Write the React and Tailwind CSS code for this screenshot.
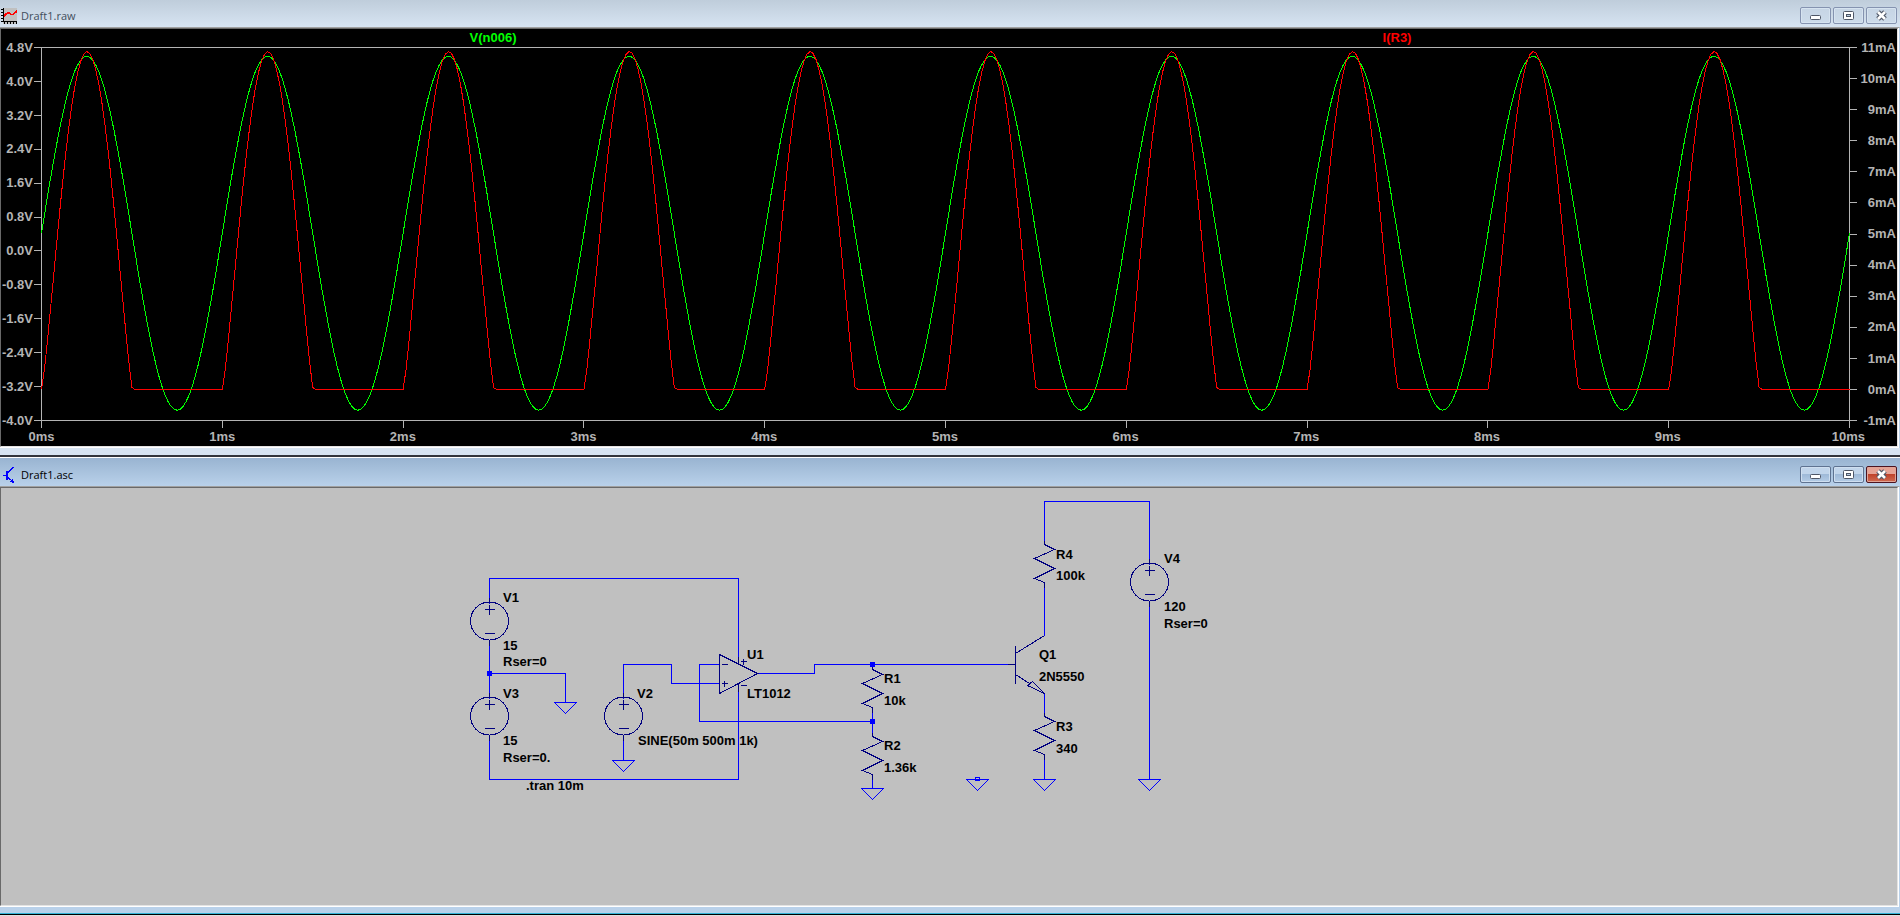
import React from 'react';
import clsx from 'clsx';

const WIRE = '#0000ff';
const PART = '#000080';

// Plot area inside the chart svg
const PLOT = { left: 7, right: 1815, top: 0, bottom: 373, width: 1823, height: 381 };

const LEFT_AXIS = ['4.8V', '4.0V', '3.2V', '2.4V', '1.6V', '0.8V', '0.0V', '-0.8V', '-1.6V', '-2.4V', '-3.2V', '-4.0V'];
const RIGHT_AXIS = ['11mA', '10mA', '9mA', '8mA', '7mA', '6mA', '5mA', '4mA', '3mA', '2mA', '1mA', '0mA', '-1mA'];
const TIME_AXIS = ['0ms', '1ms', '2ms', '3ms', '4ms', '5ms', '6ms', '7ms', '8ms', '9ms', '10ms'];

const plotHeight = PLOT.bottom - PLOT.top;
const plotWidth = PLOT.right - PLOT.left;

const voltageAt = (t) => 0.418 + 4.176 * Math.sin(2 * Math.PI * t);
// Current lags slightly behind the base drive
const currentAt = (t) => 10.87 * Math.pow(Math.max(0, Math.sin(2 * Math.PI * (t - 0.002))), 1.18);

// t runs from 0 to 10 ms
const trace = (fn, max, span) => {
    const points = [];
    for (let i = 0; i <= 600; i++) {
        const t = i / 60;
        const x = PLOT.left + (t / 10) * plotWidth;
        const y = PLOT.top + ((max - fn(t)) / span) * plotHeight;
        points.push(`${(x + 0.5).toFixed(1)},${(y + 0.5).toFixed(1)}`);
    }
    return points.join(' ');
};

const PlotIcon = () => (
    <svg width="16" height="16" viewBox="0 0 16 16" shapeRendering="crispEdges" aria-hidden="true">
        <rect x="2" y="0" width="14" height="16" fill="#c0c0c0" />
        <path d="M2 0h1v14h-1zM2 13h14v1h-14zM0 1h2v1h-2zM0 4h2v1h-2zM0 7h2v1h-2zM0 10h2v1h-2zM0 13h2v1h-2zM3 14h1v2h-1zM6 14h1v2h-1zM9 14h1v2h-1zM12 14h1v2h-1zM15 14h1v2h-1z" fill="#000" />
        <path d="M3 8.5L5 6L7 5H8L10 6.5H12L16 3" fill="none" stroke="#f00" strokeWidth="1.7" />
    </svg>
);

const SchematicIcon = () => (
    <svg width="16" height="16" viewBox="0 0 16 16" shapeRendering="crispEdges" aria-hidden="true">
        <path d="M5 4h2v9h-2zM2 8h3v1h-3z" fill="#00f" />
        <path d="M7 5.5L12.5 0M7 10.5L12.5 15.5" stroke="#00f" />
        <path d="M9 14h1v-1h1v-1h1v2h1v2h-2v-1h-2z" fill="#00f" />
    </svg>
);

const GLYPHS = {
    Minimize: <rect x="3.5" y="7.5" width="10" height="4" rx="1" fill="#fff" stroke="#4e5666" />,
    Restore: (
        <>
            <rect x="3.5" y="3.5" width="10" height="8" rx="1" fill="#fff" stroke="#4e5666" />
            <rect x="6.5" y="6.5" width="4" height="2" fill="#b9cde2" stroke="#4e5666" />
        </>
    ),
    Close: (
        <>
            <path d="M5 4L12 11M12 4L5 11" stroke="#4e5666" strokeWidth="5" />
            <path d="M5 4L12 11M12 4L5 11" stroke="#fff" strokeWidth="2.6" />
        </>
    ),
};

const CaptionButton = ({ kind, active }) => (
    <button
        type="button"
        aria-label={kind}
        className={clsx(
            'w-[31px] h-[17px] flex items-center justify-center rounded-[2px] border',
            active && kind === 'Close' && 'border-[#4c1420] bg-linear-to-b from-[#e6a395] from-45% via-[#c0442c] via-50% to-[#cf6a50] shadow-[inset_0_0_0_1px_#e0a497]',
            active && kind !== 'Close' && 'border-[#5f7391] bg-linear-to-b from-[#c1d5eb] from-45% via-[#9fbad8] via-50% to-[#b4cce6] shadow-[inset_0_0_0_1px_#cfdff0]',
            !active && 'border-[#8593b0] bg-linear-to-b from-[#c6d5e5] to-[#cddbea] shadow-[inset_0_0_0_1px_#d6e3f0]'
        )}
    >
        <svg width="17" height="15" viewBox="0 0 17 15" className="flex-none" aria-hidden="true">
            {GLYPHS[kind]}
        </svg>
    </button>
);

const TitleBar = ({ icon, title, active }) => (
    <header
        className={clsx(
            'flex-none flex items-end justify-between pl-px pr-[3px] pb-[3px] bg-linear-to-b',
            active ? 'h-[29px] border-t border-white from-[#99b4d1] to-[#b9d1ea]' : 'h-[27px] from-[#bfcddb] to-[#d7e4f2]'
        )}
    >
        <div className="flex items-center gap-1">
            {icon}
            <h1 className={clsx("font-['Open_Sans',sans-serif] text-[11px] leading-4", active ? 'text-black' : 'text-[#434e5c]')}>
                {title}
            </h1>
        </div>
        <div className="flex gap-[2px]">
            <CaptionButton kind="Minimize" active={active} />
            <CaptionButton kind="Restore" active={active} />
            <CaptionButton kind="Close" active={active} />
        </div>
    </header>
);

// Sunken client area
const Client = ({ className, children }) => (
    <div className="flex-1 flex flex-col border-t border-t-[#a0a0a0] border-r border-r-[#b9d1ea]">
        <div className="flex-1 flex flex-col border-r border-b border-white">
            <div className={clsx('flex-1 flex flex-col border border-t-[#696969] border-l-[#696969] border-r-[#e3e3e3] border-b-[#e3e3e3]', className)}>
                {children}
            </div>
        </div>
    </div>
);

const AxisLabels = ({ labels, className }) => (
    <div className={clsx('flex-none h-[374px] flex flex-col justify-between', className)}>
        {labels.map((label) => (
            <div key={label} className="h-px flex items-center justify-end whitespace-nowrap">{label}</div>
        ))}
    </div>
);

const Waveform = () => {
    const { left, right, top, bottom, width, height } = PLOT;
    const ticks = [
        ...LEFT_AXIS.map((_, i) => {
            const y = Math.round(top + (i * plotHeight) / (LEFT_AXIS.length - 1));
            return `M0 ${y + 0.5}H${left}`;
        }),
        ...RIGHT_AXIS.map((_, i) => {
            const y = Math.round(top + (i * plotHeight) / (RIGHT_AXIS.length - 1));
            return `M${right} ${y + 0.5}H${width}`;
        }),
        ...TIME_AXIS.map((_, i) => {
            const x = Math.round(left + (i * plotWidth) / (TIME_AXIS.length - 1));
            return `M${x + 0.5} ${bottom}V${height}`;
        }),
    ].join('');

    return (
        <>
            <div className="flex h-[18px] pl-10 pr-12 text-center leading-[18px]">
                <span className="flex-1 text-[#00ff00]">V(n006)</span>
                <span className="flex-1 text-[#ff0000]">I(R3)</span>
            </div>
            <div className="flex">
                <AxisLabels labels={LEFT_AXIS} className="w-[33px] pr-px" />
                <svg
                    className="flex-1 min-w-0 h-[381px]"
                    viewBox={`0 0 ${width} ${height}`}
                    preserveAspectRatio="none"
                    shapeRendering="crispEdges"
                    fill="none"
                >
                    <path
                        d={`${ticks}M${left + 0.5} ${top + 0.5}V${bottom}M${right + 0.5} ${top + 0.5}V${bottom}M${left} ${top + 0.5}H${right}M${left} ${bottom + 0.5}H${right}`}
                        stroke="#b4b4b4"
                        vectorEffect="non-scaling-stroke"
                    />
                    <polyline points={trace(voltageAt, 4.8, 8.8)} stroke="#00ff00" vectorEffect="non-scaling-stroke" />
                    <polyline points={trace(currentAt, 11, 12)} stroke="#ff0000" vectorEffect="non-scaling-stroke" />
                </svg>
                <AxisLabels labels={RIGHT_AXIS} className="w-10 pr-px" />
            </div>
            <div className="flex justify-between h-[18px] pl-10 pr-12">
                {TIME_AXIS.map((label) => (
                    <span key={label} className="w-px flex justify-center leading-[18px]">{label}</span>
                ))}
            </div>
        </>
    );
};

const Source = ({ x, y }) => (
    <g stroke={PART}>
        <circle cx={x} cy={y - 0.5} r="19" />
        <path d={`M${x - 5} ${y - 12}h10M${x} ${y - 17}v10M${x - 5} ${y + 12}h10M${x} ${y - 24}v5M${x} ${y + 19}v5`} />
    </g>
);

const Resistor = ({ x, y }) => (
    <path stroke={PART} d={`M${x} ${y - 4}v4l10 5l-20 9l20 10l-20 10l10 4v5`} />
);

const Ground = ({ x, y }) => <path stroke={WIRE} d={`M${x - 11} ${y}h22l-11 11z`} />;

const Junction = ({ x, y }) => <rect x={x - 2.5} y={y - 2.5} width="5" height="5" fill={WIRE} />;

const WIRES = [
    'M488 115V90H737V169',
    'M488 151V210M488 185H564V214',
    'M488 247V291H737V200',
    'M622 210V176H670V195H718M622 247V272',
    'M718 176H698V233H871',
    'M756 185H813V176H1006',
    'M871 219V248M871 286V300',
    'M1043 56V13H1148V76M1148 113V291',
    'M1043 94V147M1043 205V228M1043 266V291',
];

const LABELS = [
    ['V1', 502, 114], ['15', 502, 162], ['Rser=0', 502, 178],
    ['V3', 502, 210], ['15', 502, 257], ['Rser=0.', 502, 274],
    ['V2', 636, 210], ['SINE(50m 500m 1k)', 637, 257], ['.tran 10m', 525, 302],
    ['U1', 746, 171], ['LT1012', 746, 210],
    ['R1', 883, 195], ['10k', 883, 217], ['R2', 883, 262], ['1.36k', 883, 284],
    ['R4', 1055, 71], ['100k', 1055, 92], ['V4', 1163, 75], ['120', 1163, 123], ['Rser=0', 1163, 140],
    ['Q1', 1038, 171], ['2N5550', 1038, 193], ['R3', 1055, 243], ['340', 1055, 265],
];

const Schematic = () => (
    <svg className="w-full flex-1 min-h-80">
        {/* half pixel shift keeps the 1px strokes on the grid */}
        <g transform="translate(.5 .5)" fill="none" shapeRendering="crispEdges">
            <path d={WIRES.join('')} stroke={WIRE} />
            <Source x={488} y={133} />
            <Source x={488} y={228} />
            <Source x={622} y={228} />
            <Source x={1148} y={94} />
            <Resistor x={871} y={181} />
            <Resistor x={871} y={248} />
            <Resistor x={1043} y={56} />
            <Resistor x={1043} y={228} />
            {/* op amp */}
            <path
                stroke={PART}
                d="M718 166V205L756 185ZM720 176h6M720 195h6M723 192v6M739 173h6M742 170v6M739 197h6M737 168v8M737 195v8"
            />
            {/* transistor */}
            <path stroke={PART} d="M1006 176H1014M1014 157V195M1014 165L1043 147M1014 186L1028 195M1026 197L1031 193L1043 205Z" />
            <Ground x={564} y={214} />
            <Ground x={622} y={272} />
            <Ground x={871} y={300} />
            <Ground x={976} y={291} />
            <Ground x={1043} y={291} />
            <Ground x={1148} y={291} />
            <rect x="974" y="289" width="4" height="3" stroke={WIRE} />
            <Junction x={488} y={185} />
            <Junction x={871} y={176} />
            <Junction x={871} y={233} />
        </g>
        <g className="text-[13px] font-bold" fill="#000">
            {LABELS.map(([text, x, y]) => (
                <text key={`${x}-${y}`} x={x} y={y}>{text}</text>
            ))}
        </g>
    </svg>
);

const App = () => (
    <main className="min-h-screen flex flex-col bg-[#e0e0e0] font-['Liberation_Sans',Arial,sans-serif]">
        <section className="flex-none flex flex-col bg-[#d7e4f2]">
            <TitleBar icon={<PlotIcon />} title="Draft1.raw" />
            <Client className="bg-black text-[13px] font-bold text-[#b4b4b4]">
                <Waveform />
            </Client>
            <div className="h-[7px]" />
        </section>
        <div className="h-[2px] flex-none bg-[#32353c]" />
        <section className="flex-1 flex flex-col bg-[#b9d1ea] border-b border-black mb-px">
            <TitleBar icon={<SchematicIcon />} title="Draft1.asc" active />
            <Client className="bg-[#c0c0c0]">
                <Schematic />
            </Client>
            <div className="h-[7px] border-b border-[#35b4d6]" />
        </section>
    </main>
);

export default App;
